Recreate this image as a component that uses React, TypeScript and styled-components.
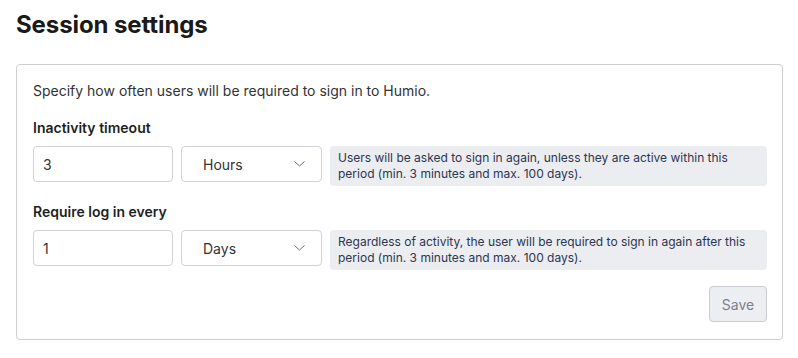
import React from 'react';
import styled, { createGlobalStyle } from 'styled-components';

const GlobalStyle = createGlobalStyle`
  body {
    margin: 0;
    background: #ffffff;
    font-family: Inter, "Noto Sans", sans-serif;
    color: #1f1f1f;
  }
`;

const Page = styled.div`
  padding: 9px 15px 20px 16px;
`;

const Title = styled.h1`
  margin: 0 0 23px;
  font-size: 24px;
  line-height: 32px;
  font-weight: 700;
  color: #1a1a1a;
  letter-spacing: -0.1px;
`;

const Panel = styled.section`
  border: 1px solid #cfcfcf;
  border-radius: 4px;
  padding: 15px 15px 17px 16px;
  display: flex;
  flex-direction: column;
`;

const Intro = styled.p`
  margin: 0 0 16px;
  font-size: 14px;
  line-height: 22px;
  color: #333333;
`;

const Field = styled.div`
  display: flex;
  flex-direction: column;
  gap: 8px;
  margin-bottom: 16px;
`;

const Label = styled.label`
  font-size: 14px;
  line-height: 20px;
  font-weight: 600;
  color: #1f1f1f;
`;

const Row = styled.div`
  display: flex;
  align-items: flex-start;
  gap: 8px;
`;

const NumberInput = styled.input`
  box-sizing: border-box;
  width: 140px;
  height: 36px;
  border: 1px solid #cfd2d6;
  border-radius: 4px;
  padding: 0 9px;
  font-family: inherit;
  font-size: 14px;
  color: #333;
  background: #fff;
  outline: none;
`;

const SelectBox = styled.div`
  box-sizing: border-box;
  width: 141px;
  height: 36px;
  border: 1px solid #cfd2d6;
  border-radius: 4px;
  padding: 0 16px 0 21px;
  display: flex;
  align-items: center;
  justify-content: space-between;
  font-size: 14px;
  color: #333;
`;

const Help = styled.div`
  flex: 1;
  box-sizing: border-box;
  min-height: 40px;
  background: #ebedf0;
  border-radius: 4px;
  padding: 4px 8px;
  font-size: 12px;
  line-height: 16px;
  color: #2d3550;
`;

const Footer = styled.div`
  display: flex;
  justify-content: flex-end;
`;

const SaveButton = styled.button`
  box-sizing: border-box;
  width: 58px;
  height: 36px;
  border: 1px solid #c9cdd3;
  border-radius: 4px;
  background: #eceef1;
  color: #7b8190;
  font-family: inherit;
  font-size: 14px;
  cursor: not-allowed;
`;

const Chevron = () => (
  <svg width="11" height="6" viewBox="0 0 11 6" fill="none">
    <path d="M0.5 0.5 L5.5 5 L10.5 0.5" stroke="#6b6f76" strokeWidth="1" />
  </svg>
);

type FieldProps = { label: string; value: string; unit: string; help: string };

const SettingField: React.FC<FieldProps> = ({ label, value, unit, help }) => (
  <Field>
    <Label>{label}</Label>
    <Row>
      <NumberInput defaultValue={value} />
      <SelectBox>
        <span>{unit}</span>
        <Chevron />
      </SelectBox>
      <Help>{help}</Help>
    </Row>
  </Field>
);

export default function App() {
  return (
    <>
      <GlobalStyle />
      <Page>
        <Title>Session settings</Title>
        <Panel>
          <Intro>Specify how often users will be required to sign in to Humio.</Intro>
          <SettingField
            label="Inactivity timeout"
            value="3"
            unit="Hours"
            help="Users will be asked to sign in again, unless they are active within this period (min. 3 minutes and max. 100 days)."
          />
          <SettingField
            label="Require log in every"
            value="1"
            unit="Days"
            help="Regardless of activity, the user will be required to sign in again after this period (min. 3 minutes and max. 100 days)."
          />
          <Footer>
            <SaveButton disabled>Save</SaveButton>
          </Footer>
        </Panel>
      </Page>
    </>
  );
}
